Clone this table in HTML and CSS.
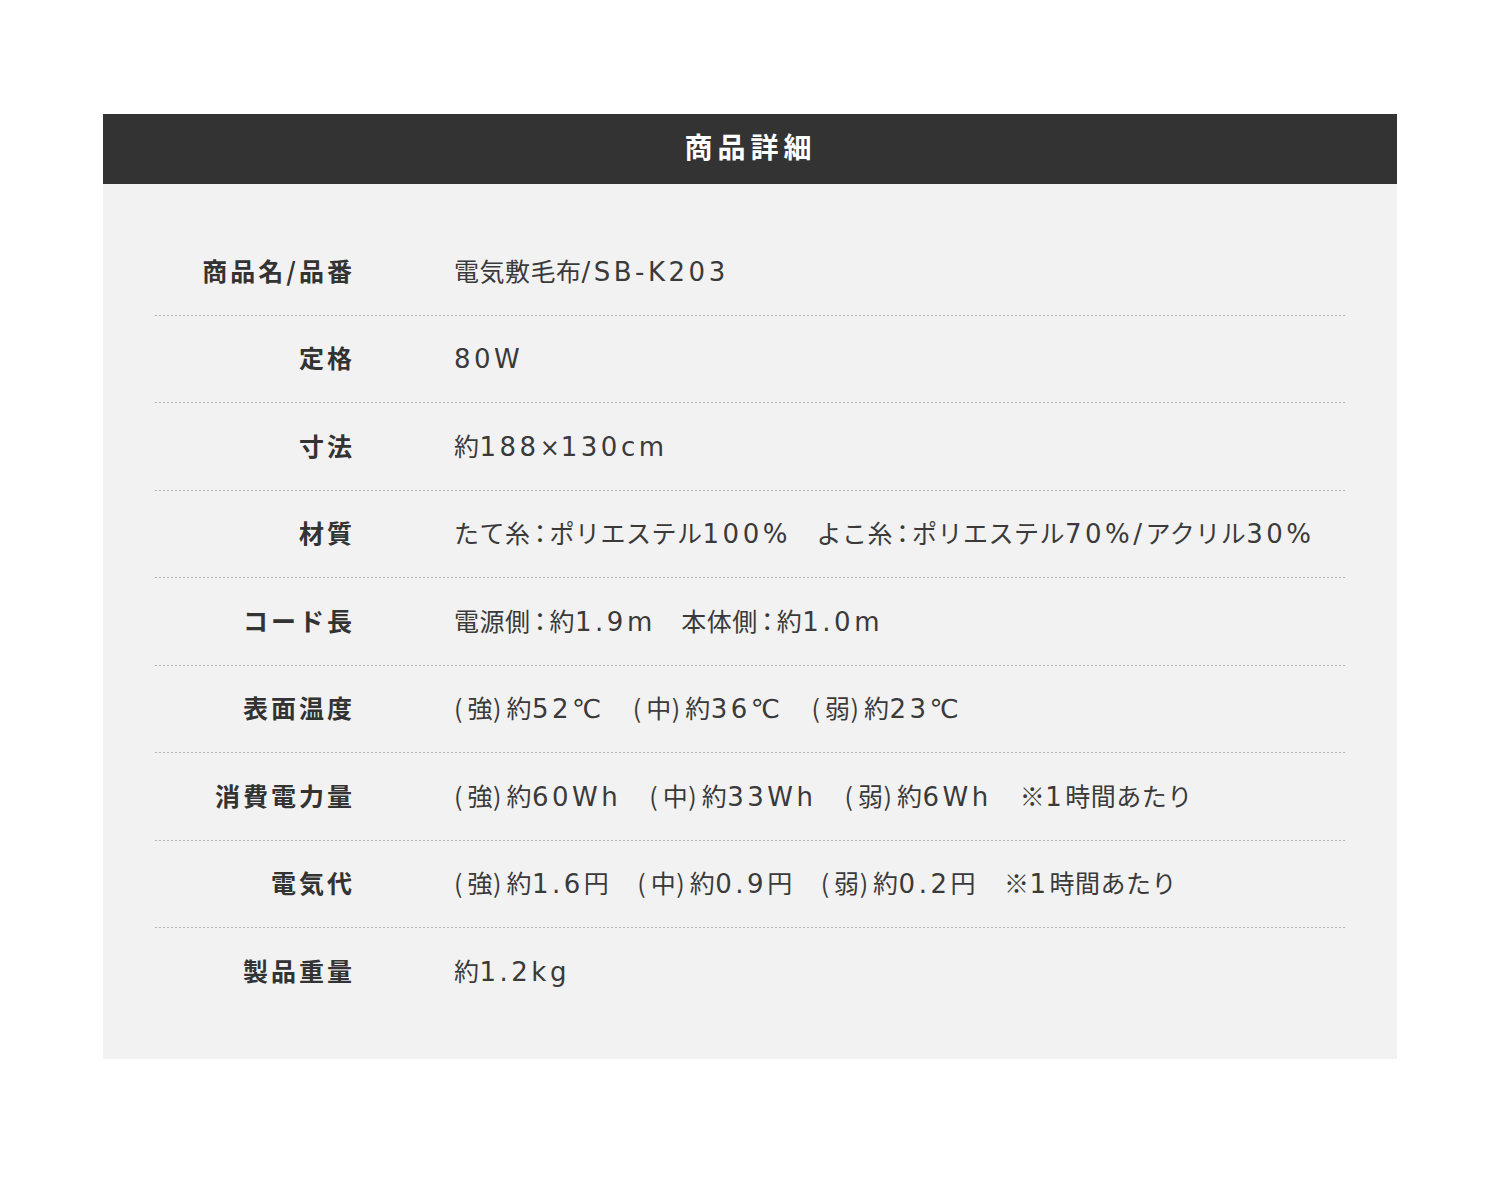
FILE: index.html
```html
<!DOCTYPE html>
<html lang="ja">
<head>
<meta charset="utf-8">
<title>商品詳細</title>
<link rel="stylesheet" href="styles.css">
</head>
<body>
<div class="page">
  <section class="panel">
    <h2 class="panel-title">商品詳細</h2>
    <div class="panel-body">
      <div class="row"><div class="label">商品名/品番</div><div class="value">電気敷毛布<span class="en">/SB-K203</span></div></div>
      <div class="row"><div class="label">定格</div><div class="value"><span class="en">80W</span></div></div>
      <div class="row"><div class="label">寸法</div><div class="value">約<span class="en">188</span><span class="x">×</span><span class="en">130cm</span></div></div>
      <div class="row"><div class="label">材質</div><div class="value">たて糸<span class="colon">：</span>ポリエステル<span class="en">100%</span>　よこ糸<span class="colon">：</span>ポリエステル<span class="en">70%/</span>アクリル<span class="en">30%</span></div></div>
      <div class="row"><div class="label">コード長</div><div class="value">電源側<span class="colon">：</span>約<span class="en">1.9m</span>　本体側<span class="colon">：</span>約<span class="en">1.0m</span></div></div>
      <div class="row"><div class="label">表面温度</div><div class="value"><span class="p">(</span>強<span class="p">)</span>約<span class="en">52℃</span><span class="gap">　</span><span class="p">(</span>中<span class="p">)</span>約<span class="en">36℃</span><span class="gap">　</span><span class="p">(</span>弱<span class="p">)</span>約<span class="en">23℃</span></div></div>
      <div class="row"><div class="label">消費電力量</div><div class="value"><span class="p">(</span>強<span class="p">)</span>約<span class="en">60Wh</span><span class="gap">　</span><span class="p">(</span>中<span class="p">)</span>約<span class="en">33Wh</span><span class="gap">　</span><span class="p">(</span>弱<span class="p">)</span>約<span class="en">6Wh</span><span class="gap">　</span>※<span class="en">1</span>時間あたり</div></div>
      <div class="row"><div class="label">電気代</div><div class="value"><span class="p">(</span>強<span class="p">)</span>約<span class="en">1.6</span>円<span class="gap">　</span><span class="p">(</span>中<span class="p">)</span>約<span class="en">0.9</span>円<span class="gap">　</span><span class="p">(</span>弱<span class="p">)</span>約<span class="en">0.2</span>円<span class="gap">　</span>※<span class="en">1</span>時間あたり</div></div>
      <div class="row last"><div class="label">製品重量</div><div class="value">約<span class="en">1.2kg</span></div></div>
    </div>
  </section>
</div>
</body>
</html>
```

FILE: styles.css
```css
html, body {
  margin: 0;
  padding: 0;
  background: #ffffff;
}
body {
  font-family: "Noto Sans CJK JP", "Noto Sans", sans-serif;
  color: #333333;
}
.page {
  padding-top: 114px;
  padding-bottom: 141px;
}
.panel {
  width: 1294px;
  margin: 0 auto;
  background: #f2f2f2;
}
.panel-title {
  margin: 0;
  height: 70px;
  box-sizing: border-box;
  padding: 0 0 6px 1px;
  background: #333333;
  color: #ffffff;
  font-size: 28px;
  font-weight: 700;
  letter-spacing: 5px;
  display: flex;
  align-items: center;
  justify-content: center;
}
.panel-body {
  padding: 44px 52px 43.5px;
}
.row {
  height: 87.5px;
  box-sizing: border-box;
  padding-bottom: 4px;
  display: flex;
  align-items: center;
  background-image: repeating-linear-gradient(to right, #b3b3b3 0 2px, transparent 2px 4px);
  background-size: 100% 1px;
  background-repeat: no-repeat;
  background-position: left bottom;
}
.row.last {
  background-image: none;
}
.label {
  width: 200px;
  flex: none;
  text-align: right;
  font-size: 25px;
  font-weight: 700;
  letter-spacing: 3px;
  margin-right: -7px;
  color: #333333;
}
.value {
  margin-left: 106px;
  font-size: 25px;
  font-weight: 400;
  letter-spacing: 0.5px;
  color: #3a3a3a;
  white-space: nowrap;
}
.en {
  font-family: "DejaVu Sans", "Noto Sans CJK JP", sans-serif;
  font-size: 26px;
  letter-spacing: 3.5px;
}
.x {
  font-family: "DejaVu Sans", sans-serif;
  font-size: 24px;
  letter-spacing: 1px;
}
.p {
  letter-spacing: 5px;
}
.gap {
  letter-spacing: 3px;
}
.colon {
  letter-spacing: 0;
  margin: 0 -3px;
}
```
